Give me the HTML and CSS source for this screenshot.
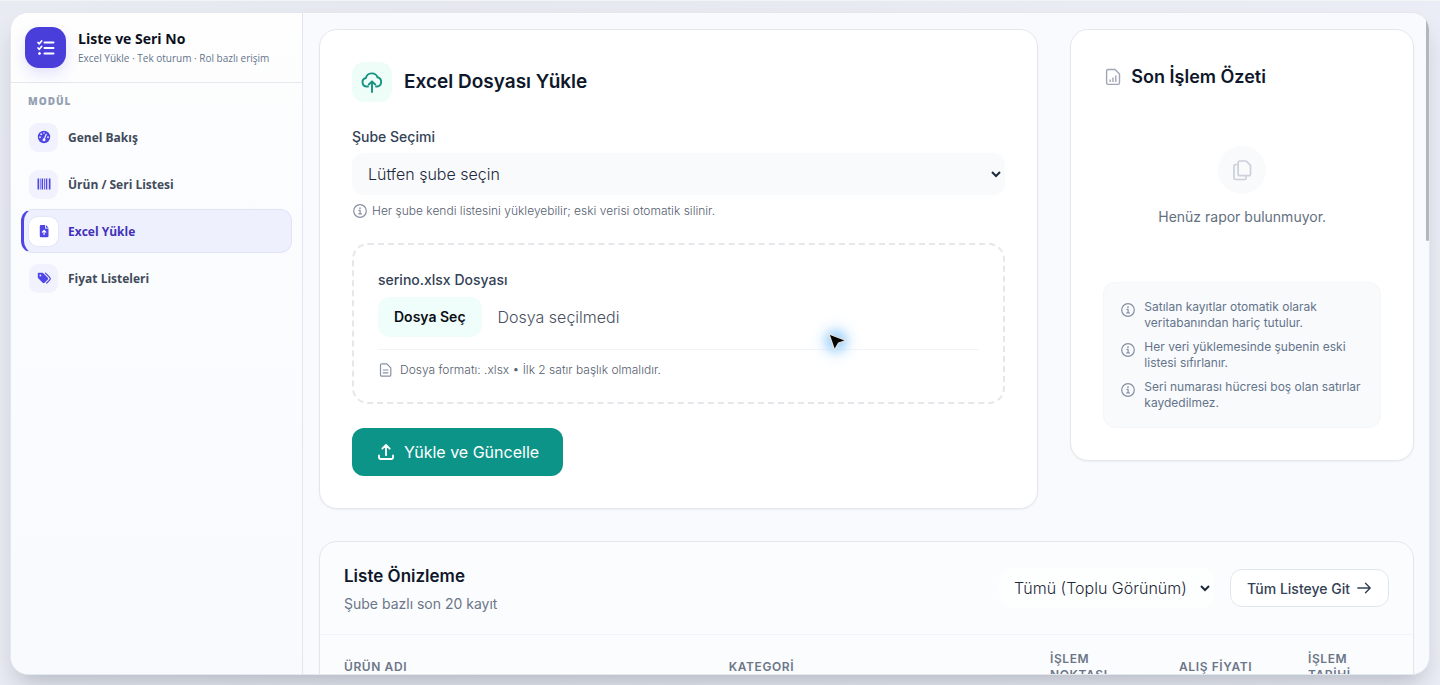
FILE: index.html
```html
<!DOCTYPE html>
<html lang="tr">
<head>
<meta charset="utf-8">
<title>Liste ve Seri No</title>
<link rel="stylesheet" href="styles.css">
</head>
<body>
<div class="shell">
  <aside class="sidebar">
    <header class="brand">
      <span class="brand-logo">
        <svg width="18" height="18" viewBox="0 0 18 18" fill="none" stroke="currentColor" stroke-width="2" stroke-linecap="round" stroke-linejoin="round"><path d="M7.500 3.500h9M7.500 9h9M7.500 14.500h9"/><path d="M1 3.500l1.300 1.300L4.600 2M1 9l1.300 1.300L4.600 7.500" stroke-width="1.700"/><circle cx="2.500" cy="14.500" r="1" fill="currentColor" stroke-width="1"/></svg>
      </span>
      <div>
        <h1 class="brand-title">Liste ve Seri No</h1>
        <p class="brand-sub">Excel Yükle · Tek oturum · Rol bazlı erişim</p>
      </div>
    </header>
    <nav class="menu">
      <h2 class="menu-title">MODÜL</h2>
      <a class="menu-item" href="#"><span class="menu-icon"><svg width="14" height="14" viewBox="0 0 14 14"><circle cx="7" cy="7" r="6.200" fill="#4f46e5"/><g fill="#eef0ff"><circle cx="3" cy="7.200" r=".9"/><circle cx="4.200" cy="4.200" r=".9"/><circle cx="7" cy="3" r=".8"/><circle cx="11" cy="7.200" r=".9"/><circle cx="7" cy="9.800" r="1.500"/></g><path d="M7.200 9.300l2-5" stroke="#eef0ff" stroke-width="1.200" stroke-linecap="round"/></svg></span>Genel Bakış</a>
      <a class="menu-item" href="#"><span class="menu-icon"><svg width="14" height="14" viewBox="0 0 14 14" fill="#4f46e5"><path d="M.5 1.500h1.500v11H.5zM2.800 1.500h.8v11h-.8zM4.600 1.500h1.500v11H4.600zM7 1.500h.8v11H7zM8.800 1.500h1.500v11H8.800zM11.800 1.500h1.700v11h-1.700z"/></svg></span>Ürün / Seri Listesi</a>
      <a class="menu-item active" href="#" aria-current="page"><span class="menu-icon"><svg width="14" height="14" viewBox="0 0 14 14"><path d="M4 1h4v3.500h3.500V12a1.200 1.200 0 0 1-1.200 1.200H4A1.200 1.200 0 0 1 2.800 12V2.200A1.200 1.200 0 0 1 4 1zM8.800 1l2.700 2.700H8.800z" fill="#4f46e5"/><path d="M7.100 6.400v4M5.400 8.100l1.700-1.700 1.700 1.700" fill="none" stroke="#fff" stroke-width="1.200" stroke-linecap="round" stroke-linejoin="round"/></svg></span>Excel Yükle</a>
      <a class="menu-item" href="#"><span class="menu-icon"><svg width="14" height="14" viewBox="0 0 14 14"><path d="M.8 2.600v3.700c0 .4.100.7.400 1l4.500 4.500c.5.500 1.400.5 1.900 0l3.200-3.200c.5-.5.500-1.400 0-1.900L6.300 2.200a1.400 1.400 0 0 0-1-.4H1.600a.8.800 0 0 0-.8.800z" fill="#4f46e5"/><circle cx="3.400" cy="4.400" r=".9" fill="#eef0ff"/><path d="M8.500 2.200l3.900 4c.9.900.9 2.200 0 3.100l-2.700 2.700" fill="none" stroke="#4f46e5" stroke-width="1.200" stroke-linecap="round"/></svg></span>Fiyat Listeleri</a>
    </nav>
  </aside>

  <main class="content">
    <section class="card upload">
      <div class="upload-head">
        <span class="upload-badge"><svg width="24" height="24" viewBox="0 0 24 24" fill="none" stroke="currentColor" stroke-width="1.900" stroke-linecap="round" stroke-linejoin="round"><path d="M8 16.500H6.800A4.300 4.300 0 0 1 5.900 8 6.100 6.100 0 0 1 17.500 7.300 4.700 4.700 0 0 1 17.300 16.500H16"/><path d="M12 22V11.500M8.800 14.500l3.200-3.200 3.200 3.200"/></svg></span>
        <h2 class="upload-title">Excel Dosyası Yükle</h2>
      </div>
      <label class="label" for="branch">Şube Seçimi</label>
      <select class="select branch" id="branch"><option>Lütfen şube seçin</option></select>
      <p class="hint"><svg class="info" viewBox="0 0 16 16"><circle cx="8" cy="8" r="6.300"/><path d="M7 7.400h1.100v3.300M6.800 10.900h2.600"/><circle cx="8" cy="5.200" r=".3"/></svg>Her şube kendi listesini yükleyebilir; eski verisi otomatik silinir.</p>
      <div class="drop">
        <label class="label" for="pick">serino.xlsx Dosyası</label>
        <div class="picker"><button class="pick" id="pick" type="button">Dosya Seç</button><span>Dosya seçilmedi</span></div>
        <p class="hint format"><svg class="info" viewBox="0 0 16 16"><path d="M3.800 1.800h5l4 4v7.100a1.300 1.300 0 0 1-1.300 1.300H3.800a1.300 1.300 0 0 1-1.300-1.300V3.100a1.300 1.300 0 0 1 1.300-1.300zM5.200 8h4.800M5.200 10.800h4.800"/></svg>Dosya formatı: .xlsx • İlk 2 satır başlık olmalıdır.</p>
        <svg class="pointer" width="80" height="80" viewBox="0 0 80 80"><defs><radialGradient id="glow"><stop offset="0" stop-color="#5ab0fa" stop-opacity=".7"/><stop offset=".35" stop-color="#8cc8fc" stop-opacity=".4"/><stop offset=".6" stop-color="#c6e4fe" stop-opacity=".15"/><stop offset="1" stop-color="#fff" stop-opacity="0"/></radialGradient></defs><circle cx="40" cy="40" r="30" fill="url(#glow)"/><path d="M33 33l17 6.500-7.500 2.500-4 7z" fill="#050505" stroke="#e6e4e0" stroke-width="1.200" stroke-linejoin="round"/></svg>
      </div>
      <button class="submit" type="button"><svg width="20" height="20" viewBox="0 0 20 20" fill="none" stroke="currentColor" stroke-width="1.800" stroke-linecap="round" stroke-linejoin="round"><path d="M3 13.500v1.700A1.800 1.800 0 0 0 4.800 17h10.400a1.800 1.800 0 0 0 1.800-1.800v-1.700M10 13.200V3.200M6.300 6.700L10 3l3.700 3.700"/></svg>Yükle ve Güncelle</button>
    </section>

    <section class="card summary">
      <h2 class="summary-title"><svg width="20" height="20" viewBox="0 0 20 20" fill="none" stroke="#a1a5b5" stroke-width="1.400" stroke-linejoin="round"><path d="M5.200 2.500H12l4.500 4.500v8.800a1.600 1.600 0 0 1-1.600 1.600H5.200a1.600 1.600 0 0 1-1.600-1.600V4.100a1.600 1.600 0 0 1 1.600-1.600z"/><path d="M7.200 12.500V15M10 10.500V15M12.800 8.500V15"/></svg>Son İşlem Özeti</h2>
      <div class="empty">
        <span class="empty-icon"><svg width="24" height="24" viewBox="0 0 24 24" fill="none" stroke="#cbd0da" stroke-width="1.700" stroke-linejoin="round"><path d="M9.800 3h6.400L20.500 7.300V16A1.700 1.700 0 0 1 18.800 17.700H9.800A1.700 1.700 0 0 1 8.100 16V4.700A1.700 1.700 0 0 1 9.800 3z"/><path d="M8 6.500H5.600A1.600 1.600 0 0 0 4 8.100V20a1.500 1.500 0 0 0 1.500 1.500h9a1.600 1.600 0 0 0 1.600-1.600v-2"/></svg></span>
        <p>Henüz rapor bulunmuyor.</p>
      </div>
      <ul class="notes">
        <li><svg class="info" viewBox="0 0 16 16"><circle cx="8" cy="8" r="6.300"/><path d="M7 7.400h1.100v3.300M6.800 10.900h2.600"/><circle cx="8" cy="5.200" r=".3"/></svg><span>Satılan kayıtlar otomatik olarak veritabanından hariç tutulur.</span></li>
        <li><svg class="info" viewBox="0 0 16 16"><circle cx="8" cy="8" r="6.300"/><path d="M7 7.400h1.100v3.300M6.800 10.900h2.600"/><circle cx="8" cy="5.200" r=".3"/></svg><span>Her veri yüklemesinde şubenin eski listesi sıfırlanır.</span></li>
        <li><svg class="info" viewBox="0 0 16 16"><circle cx="8" cy="8" r="6.300"/><path d="M7 7.400h1.100v3.300M6.800 10.900h2.600"/><circle cx="8" cy="5.200" r=".3"/></svg><span>Seri numarası hücresi boş olan satırlar kaydedilmez.</span></li>
      </ul>
    </section>

    <section class="card preview">
      <header class="preview-head">
        <div>
          <h2 class="preview-title">Liste Önizleme</h2>
          <p class="preview-sub">Şube bazlı son 20 kayıt</p>
        </div>
        <div class="preview-actions">
          <select class="select view" aria-label="Görünüm"><option>Tümü (Toplu Görünüm)</option></select>
          <a class="all" href="#">Tüm Listeye Git<svg width="16" height="16" viewBox="0 0 16 16" fill="none" stroke="currentColor" stroke-width="1.400" stroke-linecap="round" stroke-linejoin="round"><path d="M1.800 8h12.400M9.500 3.300L14.200 8l-4.700 4.700"/></svg></a>
        </div>
      </header>
      <table class="list">
        <colgroup><col class="c-name"><col class="c-cat"><col class="c-point"><col class="c-price"><col class="c-date"></colgroup>
        <thead><tr><th>ÜRÜN ADI</th><th>KATEGORİ</th><th>İŞLEM NOKTASI</th><th>ALIŞ FİYATI</th><th>İŞLEM TARİHİ</th></tr></thead>
      </table>
    </section>
  </main>
  <span class="scroll-thumb"></span>
</div>
</body>
</html>
```
FILE: styles.css
```css
* { box-sizing: border-box; margin: 0; padding: 0; }
body {
  height: 100vh;
  padding: 11px 10px 10px;
  border-top: 1px solid #f3f4f6;
  background: linear-gradient(90deg, #e8ebf2, #e5e8ee 30%, #e8ebf1 70%, #eaedf5);
  font-family: Inter, "Noto Sans", sans-serif;
  color: #1e293b;
  overflow: hidden;
}
.shell {
  position: relative;
  display: grid;
  grid-template-columns: 292px minmax(0, 1fr);
  height: 100%;
  border: 1px solid #e3e7ee;
  border-radius: 18px;
  background: #f9fafd;
  box-shadow: 0 14px 24px -8px rgba(15, 23, 42, .25);
  overflow: hidden;
}
.sidebar {
  border-right: 1px solid #e2e6ef;
  background: linear-gradient(#fefefe, #fbfcfe 30%, #f8fafe);
  font-family: "Open Sans", "Noto Sans", sans-serif;
}
.brand {
  display: flex;
  align-items: center;
  gap: 12px;
  height: 70px;
  padding: 0 14px;
  border-bottom: 1px solid #e4e8ef;
}
.brand-logo {
  display: grid;
  place-items: center;
  width: 41px;
  height: 41px;
  border-radius: 14px;
  background: #4a3edb;
  color: #fff;
  box-shadow: 0 6px 14px rgba(79, 70, 229, .15);
}
.brand-title { font-size: 14px; line-height: 20px; font-weight: 700; color: #0b1020; }
.brand-sub { font-size: 10px; line-height: 18px; color: #64748b; white-space: nowrap; }
.menu { display: flex; flex-direction: column; gap: 3px; padding: 11px 10px; }
.menu-title { padding: 0 7px; margin-bottom: 3px; font-size: 10px; line-height: 15px; font-weight: 800; letter-spacing: 1px; color: #94a0b3; }
.menu-item {
  display: flex;
  align-items: center;
  gap: 10px;
  height: 44px;
  padding: 0 7px;
  border: 1px solid transparent;
  border-radius: 12px;
  color: #414b5a;
  font-size: 12px;
  font-weight: 700;
  text-decoration: none;
}
.menu-icon { display: grid; place-items: center; width: 29px; height: 29px; border-radius: 9px; background: #f1f2fe; }
.menu-item.active { border: 1px solid #dfe3f8; border-left: 3px solid #4f46e5; padding-left: 5px; background: #eef0fe; color: #4332b8; }
.active .menu-icon { background: #fff; box-shadow: 0 0 1px 1px #e3e6f8; }

.content {
  display: grid;
  grid-template-columns: repeat(3, minmax(0, 1fr));
  grid-template-rows: auto auto;
  align-items: start;
  align-content: start;
  gap: 32px;
  padding: 16px 15px 16px 16px;
  overflow: hidden;
}
.card { border: 1px solid #e4e7ec; border-radius: 18px; background: #fff; box-shadow: 0 1px 2px rgba(15, 23, 42, .05); }
.upload { grid-column: span 2; padding: 32px; }
.upload-head { display: flex; align-items: center; gap: 12px; margin-bottom: 25px; }
.upload-badge { display: grid; place-items: center; width: 40px; height: 40px; border-radius: 12px; background: #effdf9; color: #169383; }
.upload-title { font-size: 19px; line-height: 28px; font-weight: 600; color: #0f172a; }
.label { display: block; font-size: 14px; line-height: 20px; font-weight: 500; color: #334155; }
.select { display: block; border: 1px solid transparent; border-radius: 12px; font-family: inherit; font-size: 16px; font-weight: 300; color: #1e293b; }
.branch { width: 100%; height: 42px; margin-top: 6px; padding: 0 11px; background: #f9fafb; }
.hint { display: flex; align-items: center; gap: 4px; margin-top: 8px; font-size: 12px; line-height: 16px; font-weight: 300; color: #56606f; }
.info { flex: none; width: 16px; height: 16px; fill: none; stroke: #8790a2; stroke-width: 1.2; stroke-linecap: round; stroke-linejoin: round; }
.drop { position: relative; margin-top: 24px; padding: 25px 24px 24px; border: 2px dashed #e5e7eb; border-radius: 16px; }
.picker { display: flex; align-items: center; gap: 16px; margin-top: 7px; padding-bottom: 12px; border-bottom: 1px solid #f1f4f7; font-size: 16px; font-weight: 300; color: #47505e; }
.pick { height: 40px; padding: 0 16px; border: 0; border-radius: 12px; background: #effdfb; font: 600 14px/20px Inter, sans-serif; color: #0a0f14; }
.format { margin-top: 12px; gap: 6px; }
.pointer { position: absolute; left: 442px; top: 56px; pointer-events: none; }
.submit {
  display: flex;
  align-items: center;
  gap: 8px;
  height: 48px;
  margin-top: 24px;
  padding: 0 24px;
  border: 0;
  border-radius: 12px;
  background: #0d9488;
  color: #fff;
  font: 400 16px/24px Inter, sans-serif;
}
.summary { padding: 33px 32px 32px; }
.summary-title { display: flex; align-items: center; gap: 8px; font-size: 18px; line-height: 28px; font-weight: 600; color: #0f172a; }
.empty { display: flex; flex-direction: column; align-items: center; gap: 13px; padding: 55px 0; font-size: 14px; line-height: 20px; color: #64707f; }
.empty-icon { display: grid; place-items: center; width: 48px; height: 48px; border-radius: 50%; background: #f9fafc; }
.notes { display: flex; flex-direction: column; gap: 8px; padding: 16px; border: 1px solid #f5f6f9; border-radius: 12px; background: #f9fafc; list-style: none; font-size: 12px; line-height: 16px; color: #64748b; }
.notes li { display: flex; gap: 8px; }
.notes .info { margin-top: 3px; }

.preview { grid-column: 1 / -1; background: #fbfcfd; }
.preview-head { display: flex; align-items: center; justify-content: space-between; padding: 20px 24px; border-bottom: 1px solid #f2f4f7; }
.preview-title { font-size: 17px; line-height: 28px; font-weight: 600; color: #0f172a; }
.preview-sub { margin-top: 4px; font-size: 14px; line-height: 20px; color: #6b7688; }
.preview-actions { display: flex; align-items: center; gap: 16px; }
.view { height: 40px; padding: 0 10px; background: #fdfefe; }
.all { display: flex; align-items: center; gap: 6px; height: 38px; padding: 0 16px; border: 1px solid #e2e6ec; border-radius: 12px; background: #fff; font-size: 14px; font-weight: 500; color: #334155; text-decoration: none; }
.list { width: 100%; table-layout: fixed; border-collapse: collapse; }
.list th { padding: 16px 24px; text-align: left; font-size: 12px; line-height: 16px; font-weight: 600; letter-spacing: .05em; color: #6b7688; }
.c-name { width: 35.2%; }
.c-cat { width: 29.4%; }
.c-point, .c-price { width: 11.8%; }
.scroll-thumb { position: absolute; right: 0; top: 6px; width: 3px; height: 222px; border-radius: 2px; background: #b3b7bc; }
```
